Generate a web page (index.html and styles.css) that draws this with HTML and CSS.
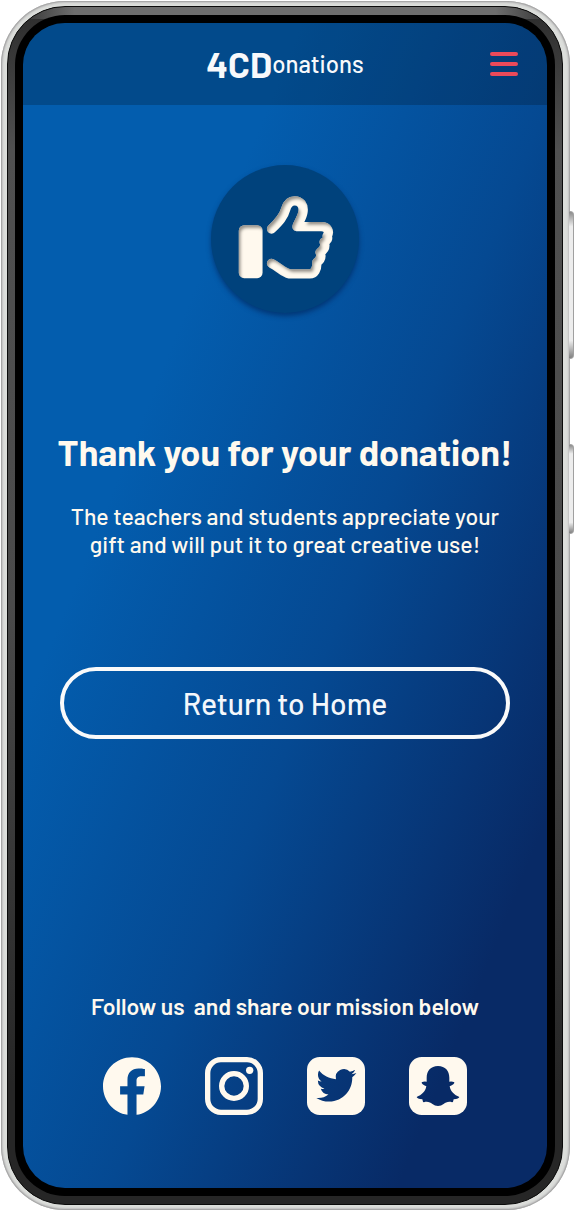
FILE: index.html
```html
<!DOCTYPE html>
<html lang="en">
<head>
<meta charset="utf-8">
<meta name="viewport" content="width=device-width, initial-scale=1">
<title>4CDonations</title>
<link rel="stylesheet" href="styles.css">
</head>
<body>
<div class="phone">
  <span class="side-key side-key-volume"></span>
  <span class="side-key side-key-power"></span>
  <div class="rim">
    <div class="bezel">
      <div class="screen">
        <header class="topbar">
          <div class="brand"><strong>4CD</strong><span>onations</span></div>
          <button class="menu" type="button" aria-label="Menu">
            <span></span><span></span><span></span>
          </button>
        </header>
        <main class="content">
          <div class="badge">
            <svg viewBox="37 30 442 442" aria-hidden="true">
              <defs>
                <filter id="inset" x="-20%" y="-20%" width="140%" height="140%">
                  <feOffset in="SourceAlpha" dx="5" dy="9" result="moved"/>
                  <feGaussianBlur in="moved" stdDeviation="5" result="soft"/>
                  <feComposite in="SourceAlpha" in2="soft" operator="out" result="edge"/>
                  <feFlood flood-color="#2b1d10" flood-opacity="0.7"/>
                  <feComposite in2="edge" operator="in" result="shade"/>
                  <feMerge><feMergeNode in="SourceGraphic"/><feMergeNode in="shade"/></feMerge>
                </filter>
              </defs>
              <g filter="url(#inset)">
                <rect x="120" y="210" width="71" height="158" rx="16" fill="#fff9ee"/>
                <path d="M218 221C242 198 254 184 260 162C265 144 274 137 287 137C304 137 314 150 312 168C310 188 298 200 294 214H366C386 214 392 229 384 242Q389 254 375 260Q382 278 363 291Q370 309 353 321C354 342 346 355 332 355H272C250 350 240 334 218 324" fill="none" stroke="#fff9ee" stroke-width="28" stroke-linecap="round" stroke-linejoin="round"/>
              </g>
            </svg>
          </div>
          <h1>Thank you for your donation!</h1>
          <p class="message">The teachers and students appreciate your gift and will put it to great creative use!</p>
          <button class="home" type="button">Return to Home</button>
        </main>
        <footer class="follow">
          <p>Follow us&nbsp; and share our mission below</p>
          <nav class="social" aria-label="Social media">
            <a href="#" aria-label="Facebook">
              <svg viewBox="0 0 24 24"><path d="M24 12.073c0-6.627-5.373-12-12-12s-12 5.373-12 12c0 5.99 4.388 10.954 10.125 11.854v-8.385H7.078v-3.47h3.047V9.43c0-3.007 1.792-4.669 4.533-4.669 1.312 0 2.686.235 2.686.235v2.953H15.83c-1.491 0-1.956.925-1.956 1.874v2.25h3.328l-.532 3.47h-2.796v8.385C19.612 23.027 24 18.062 24 12.073z"/></svg>
            </a>
            <a href="#" aria-label="Instagram">
              <svg viewBox="0 0 174 174"><g fill="none" stroke="#fff9ee" stroke-width="16"><rect x="8" y="8" width="158" height="158" rx="40"/><circle cx="87" cy="87" r="37"/></g><circle cx="134" cy="40" r="11"/></svg>
            </a>
            <a href="#" aria-label="Twitter">
              <svg viewBox="24 36 174 174">
                <mask id="bird"><rect x="24" y="36" width="174" height="174" fill="#fff"/><path transform="translate(52 61) scale(5)" fill="#000" d="M23.953 4.57a10 10 0 01-2.825.775 4.958 4.958 0 002.163-2.723c-.951.555-2.005.959-3.127 1.184a4.92 4.92 0 00-8.384 4.482C7.69 8.095 4.067 6.13 1.64 3.162a4.822 4.822 0 00-.666 2.475c0 1.71.87 3.213 2.188 4.096a4.904 4.904 0 01-2.228-.616v.06a4.923 4.923 0 003.946 4.827 4.996 4.996 0 01-2.212.085 4.936 4.936 0 004.604 3.417 9.867 9.867 0 01-6.102 2.105c-.39 0-.779-.023-1.17-.067a13.995 13.995 0 007.557 2.209c9.053 0 13.998-7.496 13.998-13.985 0-.21 0-.42-.015-.63A9.935 9.935 0 0024 4.59z"/></mask>
                <rect x="24" y="36" width="174" height="174" rx="38" mask="url(#bird)"/>
              </svg>
            </a>
            <a href="#" aria-label="Snapchat">
              <svg viewBox="331 36 174 174">
                <mask id="ghost"><rect x="331" y="36" width="174" height="174" fill="#fff"/><path fill="#000" d="M418 63C440 63 452 78 452 98V110Q460 108 467 112Q468 118 453 124C456 140 467 150 482 156Q481 161 465 163Q464 172 460 172C450 168 440 173 436 176Q427 183 418 183Q409 183 400 176C396 173 386 168 376 172Q372 172 371 163Q355 161 354 156C369 150 380 140 383 124Q368 118 369 112Q376 108 384 110V98C384 78 396 63 418 63Z"/></mask>
                <rect x="331" y="36" width="174" height="174" rx="38" mask="url(#ghost)"/>
              </svg>
            </a>
          </nav>
        </footer>
      </div>
    </div>
  </div>
</div>
</body>
</html>
```
FILE: styles.css
```css
* {
  box-sizing: border-box;
}

body {
  margin: 0;
  padding: 1px 6px 1px 1px;
  background: #fff;
  color: #fff9ee;
  font-family: Barlow, Roboto, "Liberation Sans", sans-serif;
}

h1,
p {
  margin: 0;
}

button {
  padding: 0;
  border: 0;
  background: none;
  color: inherit;
  font: inherit;
  cursor: pointer;
}

.phone {
  position: relative;
  padding: 5px 7px 5px 6px;
  border-radius: 64px;
  background: #dcdedb;
  box-shadow: inset 0 0 1px 1px #a5a5a5, inset 0 0 2px 2px #c4c4c4;
}

.side-key {
  position: absolute;
  right: -4px;
  width: 5px;
  border: 1px solid #a0a0a0;
  border-left-width: 0;
  border-radius: 0 4px 4px 0;
  background: linear-gradient(#8c8c8c, #ededed 10%, #ededed 88%, #808080);
}

.side-key-volume {
  top: 210px;
  height: 148px;
}

.side-key-power {
  top: 443px;
  height: 90px;
}

.rim {
  padding: 8px 7px;
  border: 1px solid #0a0a0a;
  border-radius: 58px;
  background:
    linear-gradient(90deg, #262626, rgba(38, 38, 38, 0) 12%, rgba(38, 38, 38, 0) 88%, #262626) top / 100% 12px no-repeat,
    linear-gradient(#6e6e6e, #6e6e6e) top / 100% 12px no-repeat,
    linear-gradient(#2c2c2c, #505050 12%, #4a4a4a 50%, #262626 90%);
}

.bezel {
  padding: 8px;
  border-radius: 50px;
  background: #000;
}

.screen {
  overflow: hidden;
  display: flex;
  flex-direction: column;
  border-radius: 42px;
  background: linear-gradient(112deg, #035dae 28%, #054992 56%, #082a66 85%);
}

.topbar {
  display: grid;
  grid-template-columns: 1fr auto 1fr;
  align-items: center;
  height: 82px;
  padding: 0 29px;
  background: rgba(0, 0, 0, 0.2);
}

.brand {
  grid-column: 2;
  display: flex;
  align-items: center;
  color: #f8f9fb;
  font-size: 24px;
  font-weight: 500;
  line-height: 40px;
}

.brand strong {
  font-size: 36px;
  font-weight: 700;
}

.menu {
  justify-self: end;
  display: flex;
  flex-direction: column;
  gap: 6px;
  width: 28px;
}

.menu span {
  height: 4px;
  border-radius: 2px;
  background: #ea4a5a;
}

.content {
  display: flex;
  flex-direction: column;
  align-items: center;
  padding: 60px 37px 0;
  text-align: center;
}

.badge {
  width: 148px;
  height: 148px;
  border-radius: 50%;
  background: #00427c;
  box-shadow: 0 3px 5px rgba(0, 30, 80, 0.55);
}

.badge svg {
  display: block;
}

h1 {
  margin-top: 115px;
  font-size: 36px;
  font-weight: 700;
  line-height: 48px;
  white-space: nowrap;
}

.message {
  margin-top: 26px;
  max-width: 448px;
  font-size: 23px;
  font-weight: 500;
  line-height: 28px;
}

.home {
  align-self: stretch;
  height: 72px;
  margin-top: 109px;
  border: 4px solid #fafafa;
  border-radius: 36px;
  color: #f4f7fb;
  font-size: 30px;
  font-weight: 500;
}

.follow {
  padding: 253px 24px 73px;
  text-align: center;
  font-size: 23px;
  font-weight: 600;
  line-height: 28px;
}

.social {
  display: flex;
  justify-content: center;
  gap: 44px;
  margin-top: 37px;
}

.social a {
  width: 58px;
  height: 58px;
}

.social svg {
  display: block;
  fill: #fff9ee;
}
```
